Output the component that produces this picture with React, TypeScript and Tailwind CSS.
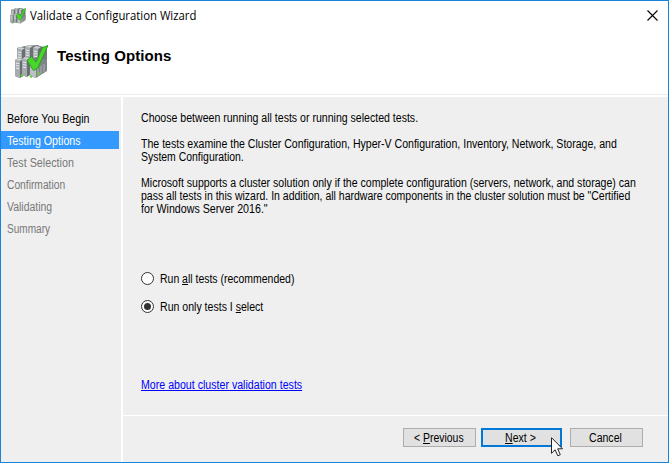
import type { ReactNode } from "react";

function Servers({ size }: { size: number }) {
  const towers = [
    [3, 2], [11, 0], [19, 1], [1, 13], [8, 12],
  ];
  return (
    <svg width={size} height={size} viewBox="0 0 34 34" className="shrink-0">
      <path d="M3 3l8-2 12-1 10 3v20l-9 8-20-6z" fill="#73797b" />
      {towers.map(([x, y]) => (
        <g key={`${x}-${y}`} transform={`translate(${x} ${y})`}>
          <path d="M0 2l3-2 5 1v17l-3 2-5-2z" fill="#6a7072" />
          <path d="M0 2l5 1v17l-5-2z" fill="#a6abad" />
          <path d="M0 2l3-2 5 1-3 2z" fill="#ced2d3" />
          <path d="M1 5l3 .7M1 7.500l3 .7M1 10l3 .7" stroke="#eef0f0" strokeWidth="1" />
        </g>
      ))}
      <path d="M16 15l6-3 11 3v11l-11 7-6-2z" fill="#7f8587" />
      <path d="M16 15l6 2v16l-6-2z" fill="#bcc1c2" />
      <path d="M24 31v-8M27 29v-8M30 27v-8" stroke="#adb2b3" />
      <path d="M7 30l2 1M16 31l2 1M24 29l2-1" stroke="#5fd52f" strokeWidth="2" />
      <path d="M13 15.500l4.500-4 4.500 5.500 6.500-14.500 5.500-2-10.500 23-4 2z" fill="#48d62b" stroke="#279a1e" strokeWidth=".9" />
    </svg>
  );
}

function Narrow({ children, scale = "scale-x-[.88]" }: { children: ReactNode; scale?: string }) {
  return <span className={`block w-max origin-left whitespace-nowrap ${scale}`}>{children}</span>;
}

function Radio({ checked, children, scale }: { checked?: boolean; children: ReactNode; scale: string }) {
  return (
    <div className="flex h-[14px] items-center">
      <span className="flex size-[13px] shrink-0 items-center justify-center rounded-full border border-[#333] bg-white">
        {checked && <span className="size-[7px] rounded-full bg-[#333]" />}
      </span>
      <div className="ml-[6px] pt-[2px] leading-[14px]"><Narrow scale={scale}>{children}</Narrow></div>
    </div>
  );
}

const steps = [
  { label: "Before You Begin", look: "text-black", scale: "scale-x-[.89]" },
  { label: "Testing Options", look: "bg-[#3399ff] text-white", scale: "scale-x-[.89]" },
  { label: "Test Selection", look: "text-[#787878]", scale: "scale-x-[.895]" },
  { label: "Confirmation", look: "text-[#787878]", scale: "scale-x-[.855]" },
  { label: "Validating", look: "text-[#787878]", scale: "scale-x-[.87]" },
  { label: "Summary", look: "text-[#787878]", scale: "scale-x-[.84]" },
];

export default function App() {
  return (
    <div className="flex h-[463px] w-[669px] flex-col overflow-hidden border border-[#1883d7] bg-white font-['Liberation_Sans',Arial,sans-serif] text-[12px] text-black">
      <header className="h-[93px] shrink-0">
        <div className="flex h-[29px] items-center pl-[9px] pr-[10px]">
          <Servers size={16} />
          <div className="ml-[4px] font-['Open_Sans',sans-serif] text-[12px]"><Narrow scale="scale-x-[.945]">Validate a Configuration Wizard</Narrow></div>
          <svg width="11" height="11" viewBox="0 0 11 11" className="ml-auto">
            <path d="M.5 .5l10 10M10.500 .5l-10 10" stroke="#000" strokeWidth="1.100" />
          </svg>
        </div>
        <div className="flex pl-[13px] pt-[15px]">
          <Servers size={34} />
          <h1 className="ml-[9px] mt-[2px] text-[15px] font-bold leading-[18px] tracking-[.1px]">Testing Options</h1>
        </div>
      </header>
      <div className="mb-[2px] h-px shrink-0 bg-[#ececec]" />
      <div className="flex min-h-0 flex-1 gap-[2px]">
        <nav className="flex w-[120px] shrink-0 flex-col gap-1 bg-[#efefef] pt-[12px]">
          {steps.map((s) => (
            <div key={s.label} className={`h-[18px] w-[118px] pl-[6px] pt-px leading-[18px] ${s.look}`}>
              <Narrow scale={s.scale}>{s.label}</Narrow>
            </div>
          ))}
        </nav>
        <div className="flex min-w-0 flex-1 flex-col gap-px">
          <main className="h-[318px] bg-[#efefef] pl-[18px] pt-[15px] leading-[13px]">
            <p className="mb-[13px]"><Narrow>Choose between running all tests or running selected tests.</Narrow></p>
            <p><Narrow>The tests examine the Cluster Configuration, Hyper-V Configuration, Inventory, Network, Storage, and</Narrow></p>
            <p className="mb-[13px]"><Narrow scale="scale-x-[.87]">System Configuration.</Narrow></p>
            <p><Narrow>Microsoft supports a cluster solution only if the complete configuration (servers, network, and storage) can</Narrow></p>
            <p><Narrow scale="scale-x-[.875]">pass all tests in this wizard. In addition, all hardware components in the cluster solution must be "Certified</Narrow></p>
            <p><Narrow scale="scale-x-[.89]">for Windows Server 2016."</Narrow></p>
            <div className="mt-[55px] flex flex-col gap-[14px]">
              <Radio scale="scale-x-[.872]">Run <u>a</u>ll tests (recommended)</Radio>
              <Radio checked scale="scale-x-[.88]">Run only tests I <u>s</u>elect</Radio>
            </div>
            <a className="mt-[66px] block text-[#0000ff] underline"><Narrow scale="scale-x-[.885]">More about cluster validation tests</Narrow></a>
          </main>
          <footer className="flex flex-1 bg-[#efefef] pl-[280px] pt-[12px]">
            <button className="h-[19px] w-[73px] border border-[#adadad] bg-[#e1e1e1] pl-[10px] pt-px leading-[17px]"><Narrow scale="scale-x-[.87]">&lt; <u>P</u>revious</Narrow></button>
            <div className="relative ml-[5px] h-[19px]">
              <button className="h-[19px] w-[81px] border-2 border-[#0078d7] bg-[#e1e1e1] pl-[22px] pt-px leading-[15px]"><Narrow><u>N</u>ext &gt;</Narrow></button>
              <svg width="13" height="20" viewBox="0 0 13 20" className="absolute left-[70px] top-[9px]">
                <path d="M.5 .7v15.600l3.600-3.500 2.700 6 2.500-1.100-2.600-5.900h4.800z" fill="#fff" stroke="#222" />
              </svg>
            </div>
            <button className="ml-[8px] h-[19px] w-[73px] border border-[#adadad] bg-[#e1e1e1] pl-[18px] pt-px leading-[17px]"><Narrow>Cancel</Narrow></button>
          </footer>
        </div>
      </div>
    </div>
  );
}
